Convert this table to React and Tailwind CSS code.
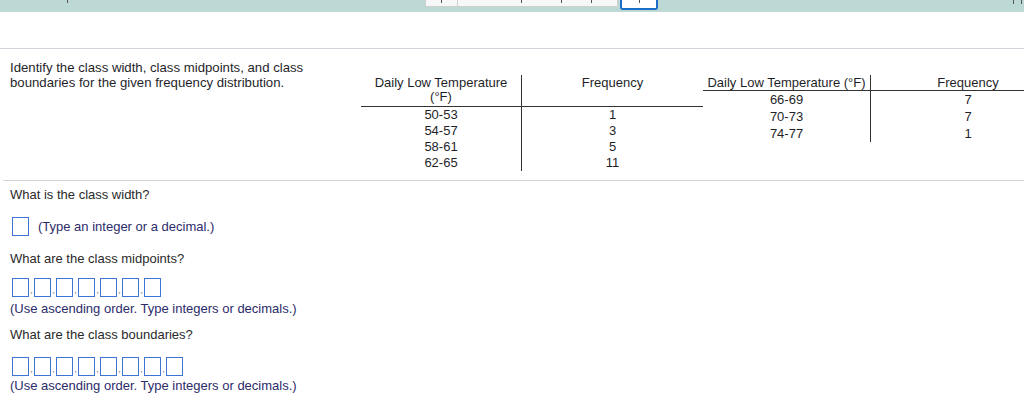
import React from "react";

const Tick = ({ ml, h = "h-[3px]" }) => (
  <span className={`block w-[1px] ${h} bg-[#555] ${ml}`} />
);

const Box = () => (
  <span className="block w-[17px] h-[19px] border border-[#3f74d6] bg-white shrink-0" />
);

const Comma = () => (
  <span className="flex w-[5px] h-[19px] items-end justify-center pb-[2px] text-[9px] leading-[9px] text-[#777]">
    ,
  </span>
);

const BoxRow = ({ n }) => {
  const items = [];
  for (let i = 0; i < n; i++) {
    if (i > 0) items.push(<Comma key={"c" + i} />);
    items.push(<Box key={"b" + i} />);
  }
  return <div className="flex items-start">{items}</div>;
};

export default function App() {
  return (
    <div className="w-[1024px] h-[408px] overflow-hidden bg-white font-['Liberation_Sans',Arial,sans-serif] text-[13px] text-[#1f1f2a]">
      {/* top toolbar strip */}
      <div className="flex items-start h-[12px] bg-[#bcd9d5]">
        <Tick ml="ml-[67px]" />
        <div className="ml-[357px] flex items-start h-[7px] w-[193px] shrink-0 bg-[#f7f7f7] border-x border-b border-[#cfcfcf]">
          <div className="flex justify-center w-[32px] h-full border-r border-[#d0d0d0]">
            <Tick ml="ml-[0px]" />
          </div>
          <Tick ml="ml-[63px]" />
          <Tick ml="ml-[39px]" />
          <Tick ml="ml-[29px]" />
        </div>
        <div className="ml-[2px] flex justify-center w-[38px] h-[10px] shrink-0 bg-white border-2 border-t-0 border-[#1b6fc6] rounded-b-[3px]">
          <Tick ml="ml-[0px]" />
        </div>
        <Tick ml="ml-[355px]" h="h-[4px]" />
        <Tick ml="ml-[7px]" h="h-[4px]" />
      </div>

      {/* header gap */}
      <div className="h-[37px] border-b border-[#d2d2da]" />

      {/* problem statement + tables */}
      <div className="flex items-start pb-[9px] border-b border-[#d2d2da] ml-[3px]">
        <div className="w-[358px] shrink-0 pl-[7px] pt-[11px] leading-[15px] text-[13.2px]">
          Identify the class width, class midpoints, and class
          <br />
          boundaries for the given frequency distribution.
        </div>
        <div className="flex items-start pt-[26px] shrink-0">
          {/* table 1 */}
          <div className="flex flex-col w-[342px] shrink-0">
            <div className="flex border-b border-[#333]">
              <div className="w-[161px] shrink-0 border-r border-[#333] text-center leading-[14px] pt-[1px] pb-[2px]">
                Daily Low Temperature
                <br />
                (°F)
              </div>
              <div className="w-[181px] shrink-0 text-center leading-[14px] pt-[1px]">Frequency</div>
            </div>
            <div className="flex">
              <div className="w-[161px] shrink-0 border-r border-[#333] text-center leading-[16px]">
                <div>50-53</div>
                <div>54-57</div>
                <div>58-61</div>
                <div>62-65</div>
              </div>
              <div className="w-[181px] shrink-0 text-center leading-[16px]">
                <div>1</div>
                <div>3</div>
                <div>5</div>
                <div>11</div>
              </div>
            </div>
          </div>
          {/* table 2 */}
          <div className="flex flex-col w-[362px] shrink-0">
            <div className="flex border-b border-[#333]">
              <div className="w-[168px] shrink-0 border-r border-[#333] text-center leading-[14px] pt-[1px]">
                Daily Low Temperature (°F)
              </div>
              <div className="w-[194px] shrink-0 text-center leading-[14px] pt-[1px]">Frequency</div>
            </div>
            <div className="flex">
              <div className="w-[168px] shrink-0 border-r border-[#333] text-center leading-[17px]">
                <div>66-69</div>
                <div>70-73</div>
                <div>74-77</div>
              </div>
              <div className="w-[194px] shrink-0 text-center leading-[17px]">
                <div>7</div>
                <div>7</div>
                <div>1</div>
              </div>
            </div>
          </div>
        </div>
      </div>

      {/* questions */}
      <div className="pl-[10px] pt-[6px] leading-[15px] text-[#2a2a2a]">
        <div>What is the class width?</div>
        <div className="flex items-center mt-[15px] ml-[2px]">
          <Box />
          <span className="ml-[9px] text-[#2c2c6a]">(Type an integer or a decimal.)</span>
        </div>
        <div className="mt-[15px]">What are the class midpoints?</div>
        <div className="mt-[12px] ml-[2px]">
          <BoxRow n={7} />
        </div>
        <div className="mt-[4px] text-[#2c2c6a]">
          (Use ascending order. Type integers or decimals.)
        </div>
        <div className="mt-[11px]">What are the class boundaries?</div>
        <div className="mt-[15px] ml-[2px]">
          <BoxRow n={8} />
        </div>
        <div className="mt-[2px] text-[#2c2c6a]">
          (Use ascending order. Type integers or decimals.)
        </div>
      </div>
    </div>
  );
}
